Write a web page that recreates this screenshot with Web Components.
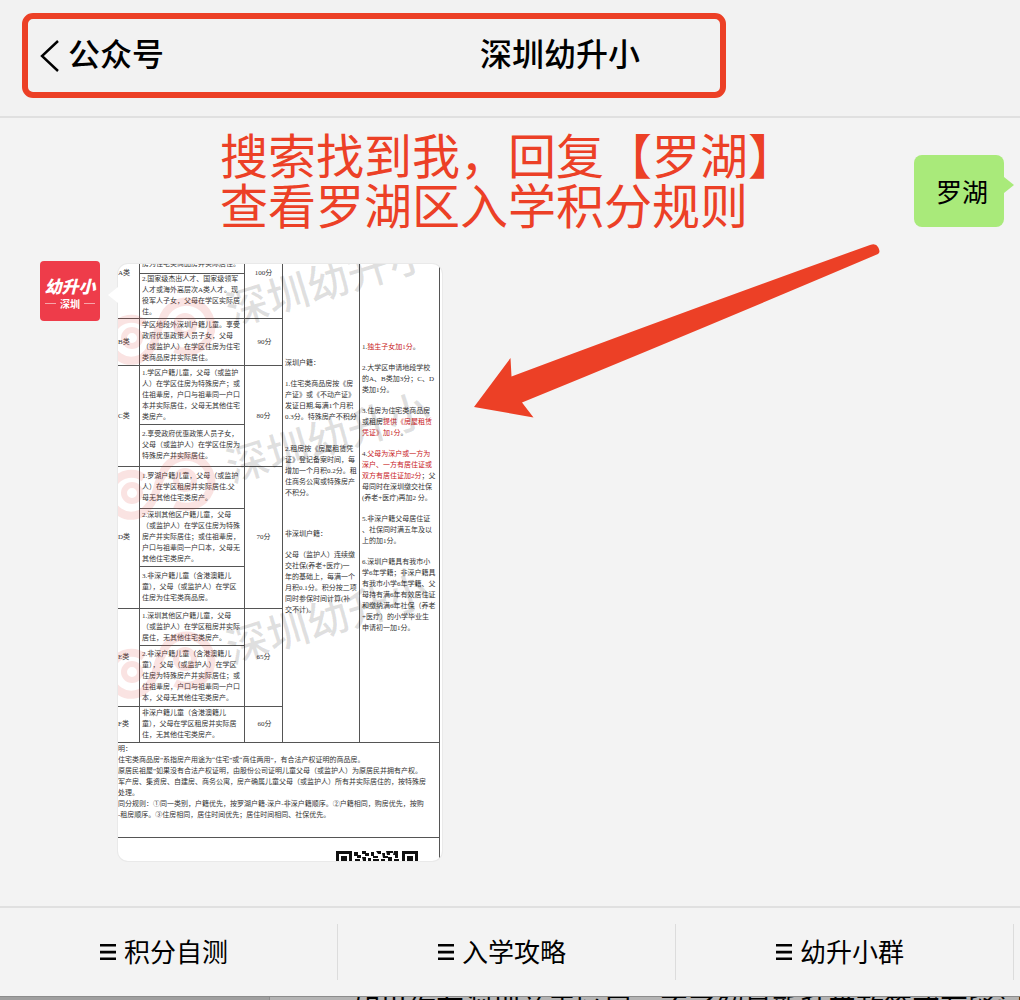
<!DOCTYPE html>
<html lang="zh-CN">
<head>
<meta charset="utf-8">
<meta name="viewport" content="width=device-width, initial-scale=1">
<title>深圳幼升小</title>
<style>
  html, body { margin: 0; }
  body { font-family: "Noto Sans CJK SC", sans-serif; color: #000; background: #f3f3f3; --mark: #ec4026; --line: #e0e0e0; }
</style>
</head>
<body>
<chat-app></chat-app>

<template id="t-chat-app">
  <style>
    :host { display: flex; flex-direction: column; min-height: 100vh; overflow: hidden; position: relative; }
    main { flex: 1; padding-top: 10px; display: flex; flex-direction: column; gap: 27px; }
    .sent { display: flex; justify-content: space-between; align-items: flex-start; height: 106px; padding: 0 16px 0 220px; }
    .sent chat-bubble { margin-top: 27px; }
    .received { display: flex; align-items: flex-start; gap: 18px; padding: 0 40px; }
    .received picture-message { margin-top: 3px; }
  </style>
  <chat-header back="公众号">深圳幼升小</chat-header>
  <main>
    <div class="sent">
      <hand-note>搜索找到我，回复【罗湖】<br>查看罗湖区入学积分规则</hand-note>
      <chat-bubble>罗湖</chat-bubble>
    </div>
    <div class="received">
      <account-avatar></account-avatar>
      <picture-message><points-table></points-table></picture-message>
    </div>
  </main>
  <pointer-arrow></pointer-arrow>
  <menu-bar>
    <menu-item>积分自测</menu-item>
    <menu-item>入学攻略</menu-item>
    <menu-item>幼升小群</menu-item>
  </menu-bar>
  <under-page>如果你在深圳关于区房，不了解最新升学政策或有疑问</under-page>
</template>

<template id="t-chat-header">
  <style>
    :host { display: block; box-sizing: border-box; padding: 13px 22px 18px; border-bottom: 2px solid var(--line); background: #f2f2f2; }
    .frame { box-sizing: border-box; display: flex; align-items: center; justify-content: space-between; width: 704px; max-width: 100%; height: 85px; padding: 0 80px 0 12px; border: 6px solid var(--mark); border-radius: 11px; }
    button { display: flex; align-items: center; gap: 9px; padding: 0; border: 0; background: none; font: inherit; color: inherit; }
    button, h1 { font-size: 32px; line-height: 48px; font-weight: 500; }
    h1 { margin: 0; }
    h1, button span { padding-bottom: 7px; }
  </style>
  <div class="frame">
    <button type="button"><svg width="19" height="32" viewBox="0 0 19 32" fill="none" stroke="#000" stroke-width="2.4"><path d="M18 1 2 16 18 31"/></svg><span></span></button>
    <h1><slot></slot></h1>
  </div>
</template>

<template id="t-hand-note">
  <style>:host { display: block; font-size: 48px; line-height: 50px; color: var(--mark); white-space: nowrap; }</style>
  <slot></slot>
</template>

<template id="t-chat-bubble">
  <style>
    :host { display: block; position: relative; padding: 16px 16px 16px 22px; border-radius: 8px; background: #a9ea7a; font-size: 26px; line-height: 40px; }
    svg { position: absolute; left: 100%; top: 22px; }
  </style>
  <slot></slot><svg width="10" height="16"><path d="M0 0 10 8 0 16z" fill="#a9ea7a"/></svg>
</template>

<template id="t-account-avatar">
  <style>
    :host { display: flex; flex-direction: column; align-items: center; justify-content: center; flex: none; box-sizing: border-box; width: 60px; height: 60px; padding-top: 4px; border-radius: 4px; background: #ee3c4a; color: #fff; font-weight: 700; }
    b { font-size: 17px; line-height: 21px; font-style: italic; }
    span { display: flex; align-items: center; gap: 4px; font-size: 10px; line-height: 15px; }
    i { width: 11px; height: 1px; background: #f7a5aa; }
  </style>
  <b>幼升小</b><span><i></i>深圳<i></i></span>
</template>

<template id="t-picture-message">
  <style>
    :host { display: block; position: relative; width: 324px; }
    .card { overflow: hidden; border-radius: 10px; background: #fff; box-shadow: 0 0 0 1px #e9e9e9; }
    .tail { position: absolute; right: 100%; top: 23px; }
  </style>
  <div class="card"><slot></slot></div>
  <svg class="tail" width="10" height="16"><path d="M10 0 0 8 10 16z" fill="#fff"/></svg>
</template>

<template id="t-points-table">
  <style>
    :host { display: block; position: relative; font: 7px/11px "Liberation Serif", "Noto Sans CJK SC", serif; color: #333; white-space: nowrap; }
    .sheet { width: 322px; box-sizing: border-box; border-right: 1px solid #555; }
    table { width: 100%; table-layout: fixed; border-collapse: separate; border-spacing: 0; }
    td, th { box-sizing: border-box; padding: 0; font-weight: 400; text-align: left; vertical-align: middle; border: 0 solid #555; border-bottom-width: 1px; border-right-width: 1px; }
    td:not([rowspan]) { padding-left: 2px; }
    .score { text-align: center; }
    .first { vertical-align: top; padding-top: 4px; }
    td.long { vertical-align: top; padding-left: 2px; }
    td.home { padding-top: 94px; }
    td.bonus { padding-top: 78px; border-right: 0; }
    .cut { display: flex; align-items: flex-end; height: 9px; overflow: hidden; line-height: 18px; }
    p { margin: 0 0 10px; }
    .home p:nth-child(2) { margin-bottom: 21px; }
    .home p:nth-child(3) { margin-bottom: 30px; }
    em { font-style: normal; color: #c8201c; }
    td.notes { height: 95px; vertical-align: top; padding: 1px 0 0; border-right: 0; }
    .qr { display: block; margin-left: 218px; padding-top: 13px; }
    .marks { position: absolute; left: 0; top: 0; pointer-events: none; }
    .marks text { font: 500 42px "Noto Sans CJK SC", sans-serif; fill: #000; fill-opacity: .12; }
  </style>
  <div class="sheet">
    <table>
      <colgroup><col style="width:22px"><col style="width:105px"><col style="width:38px"><col style="width:77px"><col></colgroup>
      <tr style="height:10px"><th class="first" rowspan="2">A类</th><td><div class="cut">房为住宅类商品房并实际居住。</div></td><td class="score first" rowspan="2">100分</td>
        <td class="long home" rowspan="11"><p>深圳户籍：</p><p>1.住宅类商品房按《房<br>产证》或《不动产证》<br>发证日期,每满1个月积<br>0.3分。特殊房产不积分</p><p>2.租房按《房屋租赁凭<br>证》登记备案时间，每<br>增加一个月积0.2分。租<br>住商务公寓或特殊房产<br>不积分。</p><p>非深圳户籍：</p><p>父母（监护人）连续缴<br>交社保(养老+医疗)一<br>年的基础上，每满一个<br>月积0.1分。积分按二项<br>同时参保时间计算(补<br>交不计)。</p></td>
        <td class="long bonus" rowspan="11"><p>1.<em>独生子女加1分</em>。</p><p>2.大学区申请地段学校<br>的A、B类加3分；C、D<br>类加1分。</p><p>3.住房为住宅类商品房<br>或租房<em>提供《房屋租赁<br>凭证》加1分</em>。</p><p>4.<em>父母为深户或一方为<br>深户、一方有居住证或<br>双方有居住证加2分</em>；父<br>母同时在深圳缴交社保<br>(养老+医疗)再加2 分。</p><p>5.非深户籍父母居住证<br>、社保同时满五年及以<br>上的加1分。</p><p>6.深圳户籍具有我市小<br>学6年学籍；非深户籍具<br>有我市小学6年学籍、父<br>母持有满6年有效居住证<br>和缴纳满6年社保（养老<br>+医疗）的小学毕业生<br>申请初一加1分。</p></td></tr>
      <tr style="height:45px"><td>2.国家级杰出人才、国家级领军<br>人才或海外高层次A类人才。现<br>役军人子女，父母在学区实际居<br>住。</td></tr>
      <tr style="height:47px"><th>B类</th><td>学区地段外深圳户籍儿童。享受<br>政府优惠政策人员子女，父母<br>（或监护人）在学区住房为住宅<br>类商品房并实际居住。</td><td class="score">90分</td></tr>
      <tr style="height:59px"><th rowspan="2">C类</th><td>1.学区户籍儿童，父母（或监护<br>人）在学区住房为特殊房产；或<br>住祖辈房，户口与祖辈同一户口<br>本并实际居住，父母无其他住宅<br>类房产。</td><td class="score" rowspan="2">80分</td></tr>
      <tr style="height:42px"><td>2.享受政府优惠政策人员子女，<br>父母（或监护人）在学区住房为<br>特殊房产并实际居住。</td></tr>
      <tr style="height:42px"><th rowspan="3">D类</th><td>1.罗湖户籍儿童，父母（或监护<br>人）在学区租房并实际居住,父<br>母无其他住宅类房产。</td><td class="score" rowspan="3">70分</td></tr>
      <tr style="height:58px"><td>2.深圳其他区户籍儿童，父母<br>（或监护人）在学区住房为特殊<br>房产并实际居住；或住祖辈房，<br>户口与祖辈同一户口本，父母无<br>其他住宅类房产。</td></tr>
      <tr style="height:42px"><td>3.非深户籍儿童（含港澳籍儿<br>童），父母（或监护人）在学区<br>住房为住宅类商品房。</td></tr>
      <tr style="height:37px"><th rowspan="2">E类</th><td>1.深圳其他区户籍儿童，父母<br>（或监护人）在学区租房并实际<br>居住，无其他住宅类房产。</td><td class="score" rowspan="2">65分</td></tr>
      <tr style="height:61px"><td>2.非深户籍儿童（含港澳籍儿<br>童），父母（或监护人）在学区<br>住房为特殊房产并实际居住；或<br>住祖辈房，户口与祖辈同一户口<br>本，父母无其他住宅类房产。</td></tr>
      <tr style="height:36px"><th>F类</th><td>非深户籍儿童（含港澳籍儿<br>童），父母在学区租房并实际居<br>住，无其他住宅类房产。</td><td class="score">60分</td></tr>
      <tr><td class="notes" colspan="5">明：<br>住宅类商品房”系指房产用途为“住宅”或“商住两用”，有合法产权证明的商品房。<br>原居民祖屋”如果没有合法产权证明，由股份公司证明儿童父母（或监护人）为原居民并拥有产权。<br>军产房、集资房、自建房、商务公寓，房产确属儿童父母（或监护人）所有并实际居住的，按特殊房<br>处理。<br>同分规则：①同一类别，户籍优先，按罗湖户籍-深户-非深户籍顺序。②户籍相同，购房优先，按购<br>-租房顺序。③住房相同，居住时间优先；居住时间相同、社保优先。</td></tr>
    </table>
    <svg class="qr" width="82" height="10" viewBox="0 0 82 10" fill="#111">
      <path d="M0 0h16v10h-3V3H3v7H0zM5 5h6v5H5zM66 0h16v10h-3V3H69v7h-3zM71 5h6v5h-6z"/>
      <path d="M18 1h4v3h3v3h-4V5h-3zM26 0h4v2h3v3h-4V3h-3zM35 1h3v4h4v2h-5V5h-2zM40 0h5v3h-3zM46 2h3v3h3v2h-5zM50 0h7v2h-3v2h-3zM58 0h4v7h-3V4h-2zM19 8h5v2h-5zM26 6h4v4h-3zM32 7h3v3h-3zM37 8h6v2h-6zM45 8h4v2h-4zM52 6h4v4h-4zM58 8h5v2h-5z"/>
    </svg>
  </div>
  <svg class="marks" width="322" height="597" viewBox="0 0 322 597">
    <defs>
      <g id="spiral" fill="none" stroke="#e0403c" stroke-opacity=".15">
        <path stroke-width="8" d="M24-15A21 21 0 1 0 29 13C38 2 36-9 42-17A25 25 0 1 1 55 11"/>
        <circle cx="12" cy="0" r="8" stroke-width="6"/><circle cx="65" cy="-13" r="9" stroke-width="6"/>
      </g>
    </defs>
    <use href="#spiral" x="2" y="74"/><use href="#spiral" x="2" y="229"/><use href="#spiral" x="2" y="408"/>
    <text transform="translate(114 63) rotate(-17)">深圳幼升小</text>
    <text transform="translate(114 219) rotate(-17)">深圳幼升小</text>
    <text transform="translate(114 400) rotate(-17)">深圳幼升小</text>
  </svg>
</template>

<template id="t-pointer-arrow">
  <style>:host { display: block; position: absolute; left: 474px; top: 243px; pointer-events: none; } svg { display: block; }</style>
  <svg width="406" height="175" viewBox="0 0 406 175"><path fill="#ec4026" d="M0 164 36.500 115 37.500 133.500Q220 65 396 2Q402 0 404 4Q407 9 404 11Q230 85 48 159.500L59.500 174.500z"/></svg>
</template>

<template id="t-menu-bar">
  <style>:host { display: grid; grid-template-columns: repeat(3, 1fr); padding: 16px 6px 16px 0; border-top: 2px solid var(--line); }</style>
  <slot></slot>
</template>

<template id="t-menu-item">
  <style>
    :host { display: block; border-right: 1px solid #dcdcdc; }
    button { display: flex; align-items: center; justify-content: center; gap: 8px; width: 100%; height: 56px; padding: 0 9px 0 0; border: 0; background: none; font: inherit; font-size: 26px; line-height: 38px; color: inherit; }
    span { padding-bottom: 2px; }
  </style>
  <button type="button"><svg width="16" height="16" fill="#000"><path d="M0 0h16v2.600H0zM0 6.800h16v2.600H0zM0 13.400h16V16H0z"/></svg><span><slot></slot></span></button>
</template>

<template id="t-under-page">
  <style>
    :host { display: flex; height: 4px; overflow: hidden; box-sizing: border-box; border-top: 1px solid #8c8c8c; background: #b4b4b4; font-size: 28px; line-height: 18px; white-space: nowrap; }
    .side { flex: none; width: 269px; background: #9f9f9f; border-right: 1px solid #8c8c8c; margin-right: 82px; }
  </style>
  <div class="side"></div><span><slot></slot></span>
</template>

<script>
  const define = (name, setup) => customElements.define(name, class extends HTMLElement {
    constructor() {
      super();
      this.attachShadow({ mode: 'open' }).append(document.getElementById('t-' + name).content.cloneNode(true));
    }
    connectedCallback() { if (setup) setup(this, this.shadowRoot); }
  });
  define('chat-header', (el, root) => { root.querySelector('button span').textContent = el.getAttribute('back'); });
  ['hand-note', 'chat-bubble', 'account-avatar', 'picture-message', 'points-table', 'pointer-arrow', 'menu-bar', 'menu-item', 'under-page', 'chat-app'].forEach(name => define(name));
</script>
</body>
</html>
